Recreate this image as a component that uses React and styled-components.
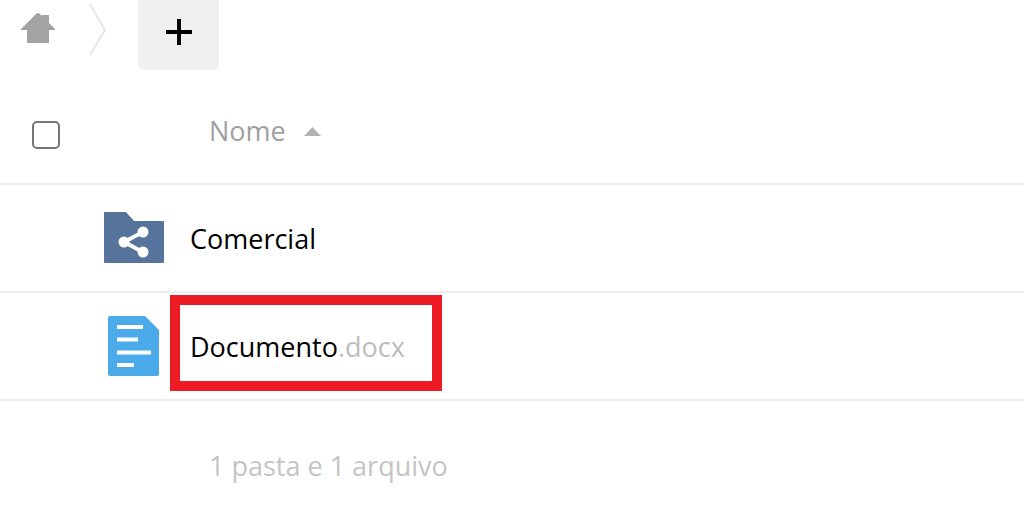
import React, { useState } from 'react'
import styled, { createGlobalStyle } from 'styled-components'

const GlobalStyle = createGlobalStyle`
  body {
    margin: 0;
    background: #fff;
    font-family: 'Open Sans', 'Noto Sans', sans-serif;
    font-size: 27px;
    line-height: 36px;
    color: #000;
  }
`

const StyledNav = styled.nav`
  display: flex;
  align-items: flex-start;
`

const StyledHome = styled.a`
  display: block;
  padding: 12px 33px 0 21px;
  > svg {
    display: block;
  }
`

const StyledSeparator = styled.svg`
  display: block;
  margin: 4px 32px 0 0;
`

const StyledAddButton = styled.button`
  display: flex;
  justify-content: center;
  width: 81px;
  height: 70px;
  padding: 18px 0 0;
  background: #f0f0f0;
  border: none;
  border-radius: 0 0 6px 6px;
`

const StyledTable = styled.table`
  width: 100%;
  table-layout: fixed;
  border-collapse: separate;
  border-spacing: 0;
`

const StyledHeadCell = styled.th`
  width: ${props => props.$width || 'auto'};
  height: 115px;
  box-sizing: border-box;
  padding: 0;
  border-bottom: 2px solid #ededed;
  text-align: left;
  vertical-align: top;
  font-weight: 400;
`

const StyledCheckbox = styled.input`
  appearance: none;
  display: block;
  width: 28px;
  height: 28px;
  margin: 51px 0 0 32px;
  background: #fff;
  border: 2px solid #767676;
  border-radius: 5px;
  &:checked {
    background: #767676;
  }
`

const StyledSort = styled.button`
  display: flex;
  align-items: center;
  gap: 18px;
  margin: 43px 0 0 39px;
  padding: 0;
  background: none;
  border: none;
  font: inherit;
  color: #a0a0a0;
`

const StyledCell = styled.td`
  height: 108px;
  box-sizing: border-box;
  padding: 2px 0 0;
  border-bottom: 2px solid #ededed;
  vertical-align: top;
`

const StyledIcon = styled.div`
  display: flex;
  align-items: center;
  justify-content: center;
  width: 60px;
  height: 102px;
`

const StyledName = styled.a`
  display: inline-block;
  box-sizing: border-box;
  height: 96px;
  padding: 24px 27px 0 10px;
  border: 10px solid ${props => (props.$highlighted ? '#ed1c24' : 'transparent')};
  color: #000;
  text-decoration: none;
  > span {
    color: #bdbdbd;
  }
`

const StyledSummary = styled.p`
  margin: 0;
  padding: 47px 0 0 209px;
  color: #c4c4c4;
`

function FolderIcon() {
  return (
    <svg width="60" height="52" viewBox="0 0 60 52" aria-hidden="true">
      <path
        d="M1 0H22L30 9H59Q60 9 60 10V50Q60 51 59 51H1Q0 51 0 50V1Q0 0 1 0Z"
        fill="#55739b"
      />
      <path d="M39 20L20 30L39 40" fill="none" stroke="#fff" strokeWidth="4" />
      <circle cx="39" cy="20" r="5.5" fill="#fff" />
      <circle cx="20" cy="30" r="5.5" fill="#fff" />
      <circle cx="39" cy="40" r="5.5" fill="#fff" />
    </svg>
  )
}

function DocumentIcon() {
  return (
    <svg width="52" height="60" viewBox="0 0 52 60" aria-hidden="true">
      <path
        d="M2 0H37L51 14V58Q51 60 49 60H2Q0 60 0 58V2Q0 0 2 0Z"
        fill="#4aaaea"
      />
      <path
        d="M9 11H35M9 23.500H30M9 36.500H43M9 49H26"
        stroke="#fff"
        strokeWidth="4"
      />
    </svg>
  )
}

const files = [
  { name: 'Comercial', extension: '', icon: FolderIcon },
  {
    name: 'Documento',
    extension: '.docx',
    icon: DocumentIcon,
    isHighlighted: true,
  },
]

export default function App() {
  const [isChecked, setIsChecked] = useState(false)

  return (
    <>
      <GlobalStyle />
      <StyledNav>
        <StyledHome href="#" aria-label="Início">
          <svg width="34" height="31" viewBox="0 0 34 31">
            <path
              d="M0 17L15 2Q17 0 19 2L21 4V3H28V11L34 17V18H28V31H6V18H0Z"
              fill="#a3a3a3"
            />
          </svg>
        </StyledHome>
        <StyledSeparator width="18" height="52" viewBox="0 0 18 52">
          <path
            d="M2 0L17 26L2 51"
            fill="none"
            stroke="#e6e6e6"
            strokeWidth="2"
          />
        </StyledSeparator>
        <StyledAddButton type="button" aria-label="Novo">
          <svg width="26" height="27" viewBox="0 0 26 27">
            <path d="M0 14H26M13 1V27" stroke="#000" strokeWidth="4" />
          </svg>
        </StyledAddButton>
      </StyledNav>
      <StyledTable>
        <thead>
          <tr>
            <StyledHeadCell $width="104px">
              <StyledCheckbox
                type="checkbox"
                aria-label="Selecionar tudo"
                checked={isChecked}
                onChange={() => setIsChecked(!isChecked)}
              />
            </StyledHeadCell>
            <StyledHeadCell $width="66px" />
            <StyledHeadCell>
              <StyledSort type="button">
                Nome
                <svg width="17" height="9" viewBox="0 0 17 9">
                  <path d="M0 9L8.500 0L17 9Z" fill="#b3b3b3" />
                </svg>
              </StyledSort>
            </StyledHeadCell>
          </tr>
        </thead>
        <tbody>
          {files.map(file => (
            <tr key={file.name}>
              <StyledCell />
              <StyledCell>
                <StyledIcon>
                  <file.icon />
                </StyledIcon>
              </StyledCell>
              <StyledCell>
                <StyledName href="#" $highlighted={file.isHighlighted}>
                  {file.name}
                  {file.extension && <span>{file.extension}</span>}
                </StyledName>
              </StyledCell>
            </tr>
          ))}
        </tbody>
      </StyledTable>
      <StyledSummary>1 pasta e 1 arquivo</StyledSummary>
    </>
  )
}
